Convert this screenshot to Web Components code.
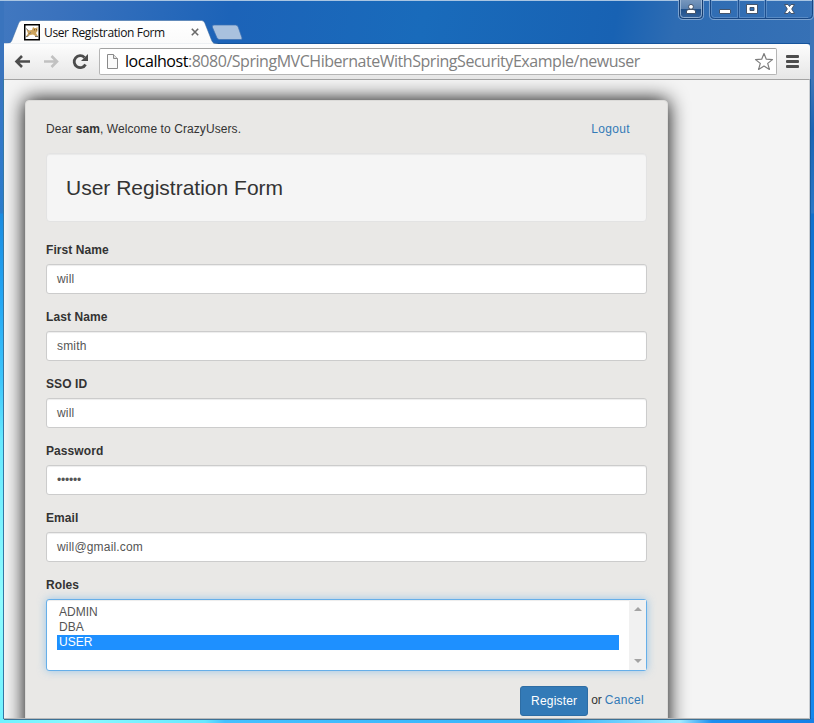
<!DOCTYPE html>
<html lang="en">
<head>
<meta charset="utf-8">
<title>User Registration Form</title>
<style>
body{margin:0;width:814px;height:723px;overflow:hidden;font-family:"Liberation Sans",Arial,sans-serif}
</style>
</head>
<body>
<browser-window>
  <title-bar slot="title">User Registration Form</title-bar>
  <tool-bar slot="tools"><span slot="host">localhost</span>:8080/SpringMVCHibernateWithSpringSecurityExample/newuser</tool-bar>
  <form-card>
    <welcome-bar>Dear <b>sam</b>, Welcome to CrazyUsers.<span slot="link">Logout</span></welcome-bar>
    <form-well>User Registration Form</form-well>
    <form-field label="First Name">will</form-field>
    <form-field label="Last Name">smith</form-field>
    <form-field label="SSO ID">will</form-field>
    <form-field label="Password" class="masked">••••••</form-field>
    <form-field label="Email">will@gmail.com</form-field>
    <role-select label="Roles"><role-option>ADMIN</role-option><role-option>DBA</role-option><role-option selected>USER</role-option></role-select>
    <form-actions><span slot="submit">Register</span><span slot="or">or</span><span slot="cancel">Cancel</span></form-actions>
  </form-card>
</browser-window>
<script>
function define(name, html){
  customElements.define(name, class extends HTMLElement{
    constructor(){
      super();
      this.attachShadow({mode:'open'}).innerHTML = html;
    }
    connectedCallback(){
      const l = this.shadowRoot.querySelector('.label');
      if(l) l.textContent = this.getAttribute('label');
    }
  });
}

define('browser-window', `<style>
:host{display:flex;flex-direction:column;box-sizing:border-box;width:814px;height:723px;padding:0 4px 4px;
 background:
 linear-gradient(#a9c5e2,#a9c5e2) 0 0/100% 1px no-repeat,
 linear-gradient(90deg,#70f2ff 0,#8afaff 80px,#66e8ff 205px,#45c0ff 225px,#38b4fb 560px,#a0eaff 680px,#1c8ff0 712px,#1580e8 100%) 0 100%/100% 5px no-repeat,
 linear-gradient(#3a74bd 0,#3a74bd 80px,#3478c8 120px,#2a7ccc 213px,#1a8be0 214px,#24a7f4 300px,#3ec6fb 380px,#66e9ff 440px,#8ffcff 600px,#70f2ff 100%) 0 0/4px 100% no-repeat,
 linear-gradient(#3d75b8 0,#3d75b8 80px,#1b64b4 130px,#2a78c8 213px,#1070cc 214px,#1080ea 330px,#1488ee 100%) 100% 0/4px 100% no-repeat,
 linear-gradient(100deg,#4178c0 0,#3a72bd 60px,#1c63b8 230px,#196bbb 420px,#1862b3 610px,#2e6cb3 670px,#3d75b8 100%)}
.page{flex:1;min-height:0;overflow:hidden;background:#f4f4f4;border-top:1px solid #a3a3a3;border-bottom:1px solid #b9b9b9;border-right:1px solid #c9cdd1;box-shadow:0 1px 0 #3d7195,-1px 0 0 #3478a5,1px 0 0 #185ba0;padding:20px 0 0 21px;box-sizing:border-box}
</style><slot name="title"></slot><slot name="tools"></slot><div class="page"><slot></slot></div>`);

define('title-bar', `<style>
:host{display:flex;height:44px;align-items:flex-start;position:relative;font:12px "Open Sans","Noto Sans",sans-serif;color:#111}
.shape{position:absolute;left:-4px;top:0}
.tab{display:flex;align-items:center;position:relative;margin:23px 0 0 20px;height:18px;width:175px}
.fav{width:16px;height:17px;flex:none}
.name{margin-left:4px;flex:1;white-space:nowrap;letter-spacing:-.37px}
.win{display:flex;position:absolute;right:-4px;top:0}
</style>
<svg class="shape" width="814" height="44" viewBox="0 0 814 44">
<defs><linearGradient id="t" x1="0" y1="0" x2="0" y2="1"><stop offset="0" stop-color="#fff"/><stop offset="1" stop-color="#fafafa"/></linearGradient></defs>
<path d="M5 43.5H200H810" stroke="#15549c" fill="none"/>
<path d="M4 44C9 43.6 11 43 12 40L18.500 23.500Q19.500 20.500 22 20.500H201.500Q204 20.500 205 23.500L211.500 40C212.500 43 214 43.500 218 44Z" fill="url(#t)" stroke="#3c6a9f" stroke-opacity=".55"/>
<path d="M4 44H213" stroke="#fafafa" stroke-width="1.500"/>
<path d="M214 25H235.500Q237.500 25 238.200 27L242 38Q242.500 39.500 240.500 39.500H219.500Q217.500 39.500 216.800 37.500L212.300 27Q212 25 214 25Z" fill="#a9c1de" stroke="#3b70b3" stroke-width=".7"/>
</svg>
<div class="tab">
<svg class="fav" viewBox="0 0 16 17"><rect x=".75" y=".75" width="14.500" height="15" fill="#fff" stroke="#000" stroke-width="1.500"/><path d="M2.500 5.500L5 6.500L8 6L9 3L10.500 4L12 4L13.500 3L13.500 7L12 9L14 12.500L11.500 12L9 10.500L6 11L3 13L2 12.500L4 9.500Z" fill="#cda45e"/><path d="M2 4.500L4.500 6.500M2 12.800L4.500 11.800M11 12.500H14M7 8.500L4.500 10" stroke="#77736a" fill="none"/><path d="M10 5.800H11M12 5.800H13" stroke="#65451a"/></svg>
<span class="name"><slot></slot></span>
<svg width="8" height="8" viewBox="0 0 8 8"><path d="M.8.800L7.200 7.200M7.200.800L.8 7.200" stroke="#696969" stroke-width="1.600"/></svg>
</div>
<svg class="win" width="140" height="22" viewBox="674 0 140 22">
<defs><linearGradient id="u" x1="0" y1="0" x2="0" y2="1"><stop offset="0" stop-color="#7797bd"/><stop offset=".48" stop-color="#5a80ae"/><stop offset=".5" stop-color="#1f4f88"/><stop offset="1" stop-color="#3765a0"/></linearGradient></defs>
<path d="M679.500 0V15Q679.500 18.500 683 18.500H699Q702.500 18.500 702.500 15V0" fill="url(#u)" stroke="#163d70"/>
<path d="M680.500 0V14.500Q680.500 17.500 683.500 17.500H698.500Q701.500 17.500 701.500 14.500V0" fill="none" stroke="#a7c0dc" stroke-opacity=".8"/>
<path d="M678.500 0V15.500Q678.500 19.500 683 19.500H699Q703.500 19.500 703.500 15.500V0" fill="none" stroke="#9db9dc" stroke-opacity=".7"/>
<path d="M709.500 0V15Q709.500 19.500 714 19.500H809Q813.500 19.500 813.500 15V0" fill="none" stroke="#8fb0d8" stroke-opacity=".8"/>
<path d="M710.500 0V14.500Q710.500 18.500 714.500 18.500H808.500Q812.500 18.500 812.500 14.500V0" fill="none" stroke="#184784"/>
<path d="M711.500 0V14.500Q711.500 17.500 714.500 17.500H737.500V0M739.500 0V17.500H764.500V0M766.500 0V17.500H808" fill="none" stroke="#6c98cc" stroke-opacity=".65"/>
<path d="M738.500 0V18M765.500 0V18" stroke="#1d4e8e"/>
<g fill="#fff" stroke="#3b4a60" stroke-width=".9"><path d="M686.500 13.500V11Q687 9.500 689 9.500H693Q695 9.500 695.500 11V13.500Z"/><circle cx="691" cy="6.800" r="2.400"/><rect x="719.500" y="9.500" width="11" height="4" rx=".5"/><path fill-rule="evenodd" d="M746.500 4.500H757.500V13.500H746.500ZM750 7.500V10.500H754V7.500Z"/><path d="M784.500 4.500H788L789.500 6.500L791 4.500H794.500L791.700 9L794.500 13.500H791L789.500 11.500L788 13.500H784.500L787.300 9Z"/></g>
</svg>`);

define('tool-bar', `<style>
:host{display:flex;align-items:center;box-sizing:border-box;height:35px;padding:0 11px 0 10px;background:linear-gradient(#fdfdfd,#e6e6e6);font:16px "Open Sans","Noto Sans",sans-serif;color:#808080;border-radius:0 3px 0 0}
svg{flex:none;display:block}
.nav{margin-right:10px}
.box{display:flex;align-items:center;box-sizing:border-box;width:678px;height:27px;background:#fff;border:1px solid #b5b5b5;border-top-color:#a2a2a2;border-radius:2px;padding:0 2px 0 6px}
.url{flex:1;margin-left:6px;padding-bottom:2px;white-space:nowrap;letter-spacing:-.46px}
::slotted(span){color:#000}
.menu{margin-left:9px}
</style>
<svg class="nav" width="75" height="18" viewBox="14 53 75 18"><g fill="none" stroke-width="2.600"><path d="M22 56L16.500 61.500L22 67M17 61.500H30" stroke="#4c4c4c"/><path d="M51.500 56L57 61.500L51.500 67M56.500 61.500H44" stroke="#c1c1c1"/><path d="M85.500 64.500A6 6 0 1 1 84.500 57.500" stroke="#4c4c4c" stroke-width="2.800"/></g><path d="M88 54V61H81Z" fill="#4c4c4c"/></svg>
<div class="box"><svg width="13" height="15" viewBox="0 0 13 15"><path d="M1.500.500H7.500L11.500 4.500V14.500H1.500Z" fill="#fafafa" stroke="#8a8a8a"/><path d="M7.500.500V4.500H11.500" fill="#e2e2e2" stroke="#8a8a8a"/></svg>
<span class="url"><slot name="host"></slot><slot></slot></span>
<svg width="20" height="19" viewBox="0 0 20 19"><path d="M10 1.500L12.300 7.200L18.500 7.600L13.700 11.400L15.400 17.400L10 14.100L4.600 17.400L6.300 11.400L1.500 7.600L7.700 7.200Z" fill="#fff" stroke="#7d7d7d" stroke-width="1.200" stroke-linejoin="round"/></svg></div>
<svg class="menu" width="13" height="13" viewBox="0 0 13 13"><path d="M1 1.500H12M1 6.500H12M1 11.500H12" stroke="#4c4c4c" stroke-width="2.800" stroke-linecap="round"/></svg>`);

define('form-card', `<style>
:host{display:flex;flex-direction:column;box-sizing:border-box;width:643px;height:680px;padding:20px 20px 0;background:#e9e8e6;border:1px solid #dcdbd9;border-radius:4px;box-shadow:0 0 20px #000;color:#333;font-size:12px;line-height:17px}
</style><slot></slot>`);

define('welcome-bar', `<style>
:host{display:flex;justify-content:space-between;height:32px;padding-right:17px;white-space:nowrap;letter-spacing:.08px}
::slotted(span){color:#337ab7;letter-spacing:.35px}
</style><span><slot></slot></span><slot name="link"></slot>`);

define('form-well', `<style>
:host{display:flex;align-items:center;box-sizing:border-box;height:69px;margin-bottom:20px;padding:1px 0 0 19px;background:#f5f5f5;border:1px solid #e3e3e3;border-radius:4px;box-shadow:inset 0 1px 1px rgba(0,0,0,.05);font-size:21px;line-height:24px;white-space:nowrap}
</style><slot></slot>`);

const fieldCss = `.label{display:block;font-weight:bold;margin-bottom:5px;letter-spacing:.08px}
.box{box-sizing:border-box;background:#fff;border:1px solid #ccc;border-radius:3px;box-shadow:inset 0 1px 1px rgba(0,0,0,.075);color:#555}`;

define('form-field', `<style>
:host{display:block;margin-bottom:15px}${fieldCss}
.box{height:30px;padding:5px 10px;line-height:18px;letter-spacing:.18px}
:host(.masked) .box{letter-spacing:-.2px}
</style><span class="label"></span><div class="box"><slot></slot></div>`);

define('role-select', `<style>
:host{display:block;margin-bottom:15px}${fieldCss}
.box{display:flex;height:72px;border-color:#66afe9;box-shadow:inset 0 1px 1px rgba(0,0,0,.075),0 0 8px rgba(102,175,233,.6);padding-left:10px}
.list{flex:1;padding-top:5px}
.bar{display:flex;flex-direction:column;justify-content:space-between;align-items:center;box-sizing:border-box;width:17px;margin-left:10px;padding:7px 0;background:#f1f1f1}
</style><span class="label"></span><div class="box"><div class="list"><slot></slot></div><div class="bar"><svg width="8" height="4"><path d="M0 4L4 0L8 4Z" fill="#a3a3a3"/></svg><svg width="8" height="4"><path d="M0 0L4 4L8 0Z" fill="#a3a3a3"/></svg></div></div>`);

define('role-option', `<style>
:host{display:block;height:15px;line-height:14px;padding-left:2px}
:host([selected]){background:#1e90ff;color:#fff}
</style><slot></slot>`);

define('form-actions', `<style>
:host{display:flex;justify-content:flex-end;align-items:flex-start;padding-right:3px}
.btn{box-sizing:border-box;width:68px;height:30px;line-height:28px;text-align:center;background:#337ab7;border:1px solid #2e6da4;border-radius:3px;color:#fff;margin-right:3px;letter-spacing:.2px}
.t{display:flex;gap:3px;padding-top:6px}
.c{color:#337ab7;letter-spacing:.3px}
</style><div class="btn"><slot name="submit"></slot></div><div class="t"><slot name="or"></slot><span class="c"><slot name="cancel"></slot></span></div>`);
</script>
</body>
</html>
